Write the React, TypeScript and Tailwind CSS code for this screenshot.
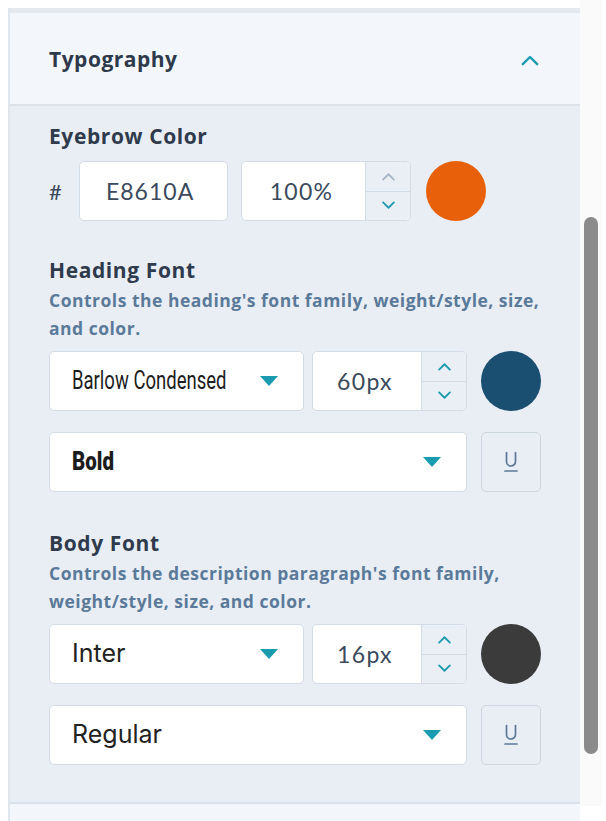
import React from "react";

const TEAL = "#1a9bb0";

function ChevronUp({ color = TEAL, size = 15 }: { color?: string; size?: number }) {
  return (
    <svg width={size} height={size * 0.6} viewBox="0 0 16 10" fill="none">
      <path d="M2 8.5 L8 2.5 L14 8.5" stroke={color} strokeWidth="2" strokeLinecap="round" strokeLinejoin="round" />
    </svg>
  );
}

function ChevronDown({ color = TEAL, size = 15 }: { color?: string; size?: number }) {
  return (
    <svg width={size} height={size * 0.6} viewBox="0 0 16 10" fill="none">
      <path d="M2 1.5 L8 7.5 L14 1.5" stroke={color} strokeWidth="2" strokeLinecap="round" strokeLinejoin="round" />
    </svg>
  );
}

function Caret() {
  return (
    <svg width="18" height="10" viewBox="0 0 18 10" className="shrink-0">
      <path d="M0 0 H18 L9 10 Z" fill={TEAL} />
    </svg>
  );
}

function Stepper({ value, width, upMuted = false }: { value: string; width: string; upMuted?: boolean }) {
  return (
    <div className={`flex h-[60px] ${width} shrink-0 overflow-hidden rounded-[5px] border border-[#d3dbe5] bg-white`}>
      <div className="flex flex-1 items-center justify-center pr-[4px] text-[23px] tracking-[1.3px] text-[#3b4a5c] font-['Lato',sans-serif]">
        {value}
      </div>
      <div className="flex w-[45px] flex-col border-l border-[#d3dbe5] bg-[#eaeff5]">
        <div className="flex flex-1 items-center justify-center border-b border-[#d3dbe5]">
          <ChevronUp color={upMuted ? "#a7b6c6" : TEAL} />
        </div>
        <div className="flex flex-1 items-center justify-center">
          <ChevronDown />
        </div>
      </div>
    </div>
  );
}

function Select({ children, width }: { children: React.ReactNode; width: string }) {
  return (
    <div
      className={`flex h-[60px] ${width} shrink-0 items-center justify-between rounded-[5px] border border-[#d3dbe5] bg-white pl-[22px] pr-[25px]`}
    >
      <div className="min-w-0 whitespace-nowrap">{children}</div>
      <Caret />
    </div>
  );
}

function UnderlineButton() {
  return (
    <div className="flex h-[60px] w-[60px] shrink-0 items-center justify-center rounded-[5px] border border-[#cdd6e1] bg-[#e9eef5]">
      <svg width="16" height="22" viewBox="0 0 16 22" fill="none">
        <path d="M3.5 1.5 V10.5 A4.5 4.5 0 0 0 12.5 10.5 V1.5" stroke="#5a7896" strokeWidth="1.7" strokeLinecap="round" />
        <path d="M2 20 H14" stroke="#5a7896" strokeWidth="1.7" strokeLinecap="round" />
      </svg>
    </div>
  );
}

function Swatch({ color }: { color: string }) {
  return <div className="h-[60px] w-[60px] shrink-0 rounded-full" style={{ backgroundColor: color }} />;
}

function Condensed({ text, bold = false }: { text: string; bold?: boolean }) {
  return (
    <span
      className={`inline-block origin-left text-[25px] text-[#1d1d1d] font-['Roboto',sans-serif] ${
        bold ? "scale-x-[0.82] font-black" : "scale-x-[0.74] font-normal"
      }`}
    >
      {text}
    </span>
  );
}

function FontGroup({
  title,
  desc,
  family,
  size,
  swatch,
  weight,
}: {
  title: string;
  desc: React.ReactNode;
  family: React.ReactNode;
  size: string;
  swatch: string;
  weight: React.ReactNode;
}) {
  return (
    <div className="flex flex-col">
      <div className="text-[21px] leading-[24px] font-bold tracking-[0.6px] text-[#2f3b4c]">{title}</div>
      <div className="mt-[4px] text-[17.5px] leading-[28px] font-bold tracking-[0.5px] text-[#5b7a99]">{desc}</div>
      <div className="mt-[9px] flex items-center">
        <Select width="w-[255px]">{family}</Select>
        <div className="ml-[8px]">
          <Stepper value={size} width="w-[155px]" />
        </div>
        <div className="ml-[14px]">
          <Swatch color={swatch} />
        </div>
      </div>
      <div className="mt-[21px] flex items-center">
        <Select width="w-[418px]">{weight}</Select>
        <div className="ml-[14px]">
          <UnderlineButton />
        </div>
      </div>
    </div>
  );
}

export default function App() {
  return (
    <div className="flex h-[821px] w-[606px] overflow-hidden bg-white font-['Open_Sans',sans-serif]">
      <div className="ml-[8px] mt-[8px] flex h-[813px] w-[572px] shrink-0 flex-col border-l-2 border-[#dfe5ec]">
        <div className="h-[5px] shrink-0 bg-[#e4e9f0]" />
        <div className="flex h-[93px] shrink-0 items-center justify-between border-b-2 border-[#dbe2ea] bg-[#f3f6fa] pt-[3px] pl-[39px] pr-[40px]">
          <span className="text-[21px] font-bold tracking-[0.5px] text-[#2e3a4b]">Typography</span>
          <ChevronUp size={20} />
        </div>
        <div className="flex shrink-0 flex-col border-b-2 border-[#dbe2ea] bg-[#e9eef5] pl-[39px] pt-[18px] pb-[37px]">
          <div className="text-[21px] leading-[24px] font-bold tracking-[0.6px] text-[#2f3b4c]">Eyebrow Color</div>
          <div className="mt-[13px] flex items-center">
            <span className="w-[30px] text-[22px] text-[#3b4a5c] font-['Lato',sans-serif]">#</span>
            <div className="flex h-[60px] w-[149px] shrink-0 items-center rounded-[5px] border border-[#d3dbe5] bg-white pl-[26px] text-[23px] tracking-[1px] text-[#3b4a5c] font-['Lato',sans-serif]">
              E8610A
            </div>
            <div className="ml-[13px]">
              <Stepper value="100%" width="w-[170px]" upMuted />
            </div>
            <div className="ml-[15px]">
              <Swatch color="#e8610a" />
            </div>
          </div>

          <div className="mt-[37px]">
            <FontGroup
              title="Heading Font"
              desc={
                <>
                  Controls the heading's font family, weight/style, size,
                  <br />
                  and color.
                </>
              }
              family={<Condensed text="Barlow Condensed" />}
              size="60px"
              swatch="#1b4f72"
              weight={<Condensed text="Bold" bold />}
            />
          </div>

          <div className="mt-[39px]">
            <FontGroup
              title="Body Font"
              desc={
                <>
                  Controls the description paragraph's font family,
                  <br />
                  weight/style, size, and color.
                </>
              }
              family={<span className="text-[25px] text-[#222] font-['Inter',sans-serif]">Inter</span>}
              size="16px"
              swatch="#3b3b3b"
              weight={<span className="text-[25px] text-[#222] font-['Inter',sans-serif]">Regular</span>}
            />
          </div>
        </div>
        <div className="flex-1 bg-[#f3f6fa]" />
      </div>
      <div className="flex h-[806px] w-[22px] shrink-0 flex-col bg-[#fafafa] px-[4px]">
        <div className="mt-[217px] h-[537px] w-[14px] rounded-full bg-[#8b8b8b]" />
      </div>
    </div>
  );
}
